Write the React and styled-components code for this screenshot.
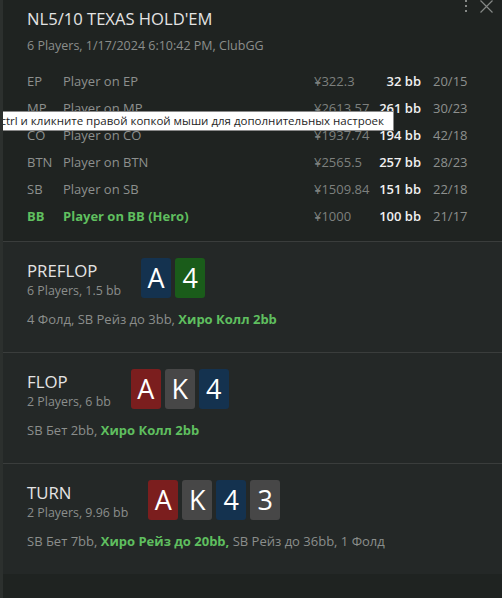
import styled, { createGlobalStyle } from "styled-components";

const GlobalStyle = createGlobalStyle`
  html, body {
    margin: 0;
    padding: 0;
    background: #1f2321;
  }
  body {
    font-family: "Open Sans", "Noto Sans", sans-serif;
  }
`;

const Page = styled.div`
  position: relative;
  width: 502px;
  height: 598px;
  overflow: hidden;
  box-sizing: border-box;
  background: #1f2321;
  border-left: 3px solid #2c302e;
  display: flex;
  flex-direction: column;
`;

const Header = styled.header`
  height: 241px;
  box-sizing: border-box;
  padding: 0 8px 0 24px;
`;

const TopRow = styled.div`
  display: flex;
  justify-content: space-between;
  align-items: flex-start;
`;

const Title = styled.h1`
  margin: 8px 0 0;
  font-size: 16.6px;
  line-height: 22px;
  font-weight: 400;
  color: #e4e4e4;
`;

const Controls = styled.div`
  display: flex;
  align-items: flex-start;
  gap: 11px;
  color: #858886;
`;

const Meta = styled.div`
  margin-top: 7px;
  font-size: 12.5px;
  line-height: 18px;
  color: #8b8e8c;
`;

const Seats = styled.div`
  margin-top: 12px;
  display: flex;
  flex-direction: column;
`;

const Seat = styled.div`
  display: grid;
  grid-template-columns: 36px 251px 60px 47px auto;
  align-items: center;
  height: 27px;
  font-size: 13px;
  color: ${(p) => (p.$hero ? "#5fbf5f" : "#8d908e")};
  font-weight: ${(p) => (p.$hero ? 700 : 400)};
`;

const Stack = styled.span`
  color: #7d807e;
  font-weight: 400;
`;

const Bb = styled.span`
  text-align: right;
  color: #f0f0f0;
  font-weight: 600;
`;

const Stats = styled.span`
  padding-left: 12px;
  color: #8d908e;
  font-weight: 400;
`;

const Street = styled.section`
  height: 111px;
  box-sizing: border-box;
  border-top: 1px solid #3a3d3c;
  background: #242827;
  padding: 16px 0 0 24px;
`;

const StreetHead = styled.div`
  display: flex;
  align-items: flex-start;
  gap: 20px;
`;

const StreetInfo = styled.div`
  padding-top: 2px;
  display: flex;
  flex-direction: column;
`;

const StreetName = styled.div`
  font-size: 16.8px;
  line-height: 22px;
  color: #e4e4e4;
`;

const StreetSub = styled.div`
  font-size: 12.4px;
  line-height: 17px;
  color: #8b8e8c;
`;

const Board = styled.div`
  display: flex;
  gap: 4px;
`;

const cardColors = {
  red: "#7b1e1e",
  gray: "#474747",
  blue: "#14324f",
  green: "#1a5c1a",
};

const Card = styled.div`
  width: 30px;
  height: 40px;
  border-radius: 3px;
  background: ${(p) => cardColors[p.$suit]};
  color: #ffffff;
  font-size: 27px;
  line-height: 40px;
  text-align: center;
`;

const Actions = styled.div`
  margin-top: 11px;
  font-size: 13px;
  line-height: 18px;
  color: #8b8e8c;
`;

const Hero = styled.span`
  color: #5fbf5f;
  font-weight: 700;
`;

const Tooltip = styled.div`
  position: absolute;
  top: 111px;
  right: 108px;
  height: 20px;
  box-sizing: border-box;
  padding: 0 9px 0 6px;
  background: #ffffff;
  border: 1px solid #8a8a8a;
  border-left: none;
  font-size: 11.5px;
  line-height: 18px;
  color: #1e1e1e;
  white-space: nowrap;
`;

const seats = [
  { pos: "EP", name: "Player on EP", stack: "¥322.3", bb: "32 bb", stats: "20/15" },
  { pos: "MP", name: "Player on MP", stack: "¥2613.57", bb: "261 bb", stats: "30/23" },
  { pos: "CO", name: "Player on CO", stack: "¥1937.74", bb: "194 bb", stats: "42/18" },
  { pos: "BTN", name: "Player on BTN", stack: "¥2565.5", bb: "257 bb", stats: "28/23" },
  { pos: "SB", name: "Player on SB", stack: "¥1509.84", bb: "151 bb", stats: "22/18" },
  { pos: "BB", name: "Player on BB (Hero)", stack: "¥1000", bb: "100 bb", stats: "21/17", hero: true },
];

const streets = [
  {
    name: "PREFLOP",
    sub: "6 Players, 1.5 bb",
    cards: [["A", "blue"], ["4", "green"]],
    before: "4 Фолд, SB Рейз до 3bb, ",
    hero: "Хиро Колл 2bb",
    after: "",
  },
  {
    name: "FLOP",
    sub: "2 Players, 6 bb",
    cards: [["A", "red"], ["K", "gray"], ["4", "blue"]],
    before: "SB Бет 2bb, ",
    hero: "Хиро Колл 2bb",
    after: "",
  },
  {
    name: "TURN",
    sub: "2 Players, 9.96 bb",
    cards: [["A", "red"], ["K", "gray"], ["4", "blue"], ["3", "gray"]],
    before: "SB Бет 7bb, ",
    hero: "Хиро Рейз до 20bb,",
    after: " SB Рейз до 36bb, 1 Фолд",
  },
];

const App = () => {
  return (
    <Page>
      <GlobalStyle />
      <Header>
        <TopRow>
          <Title>NL5/10 TEXAS HOLD'EM</Title>
          <Controls>
            <svg width="4" height="13" viewBox="0 0 4 13">
              <rect x="1" y="0" width="2" height="2" fill="currentColor" />
              <rect x="1" y="5" width="2" height="2" fill="currentColor" />
              <rect x="1" y="10" width="2" height="2" fill="currentColor" />
            </svg>
            <svg width="15" height="14" viewBox="0 0 15 14">
              <path d="M1.5 0.5 L13.5 12.5 M13.5 0.5 L1.5 12.5" stroke="currentColor" strokeWidth="1.2" />
            </svg>
          </Controls>
        </TopRow>
        <Meta>6 Players, 1/17/2024 6:10:42 PM, ClubGG</Meta>
        <Seats>
          {seats.map((s) => (
            <Seat key={s.pos} $hero={s.hero}>
              <span>{s.pos}</span>
              <span>{s.name}</span>
              <Stack>{s.stack}</Stack>
              <Bb>{s.bb}</Bb>
              <Stats>{s.stats}</Stats>
            </Seat>
          ))}
        </Seats>
      </Header>
      {streets.map((st) => (
        <Street key={st.name}>
          <StreetHead>
            <StreetInfo>
              <StreetName>{st.name}</StreetName>
              <StreetSub>{st.sub}</StreetSub>
            </StreetInfo>
            <Board>
              {st.cards.map(([rank, suit], i) => (
                <Card key={i} $suit={suit}>{rank}</Card>
              ))}
            </Board>
          </StreetHead>
          <Actions>
            {st.before}
            <Hero>{st.hero}</Hero>
            {st.after}
          </Actions>
        </Street>
      ))}
      <Tooltip>Нажмите ctrl и кликните правой копкой мыши для дополнительных настроек</Tooltip>
    </Page>
  );
};

export default App;
